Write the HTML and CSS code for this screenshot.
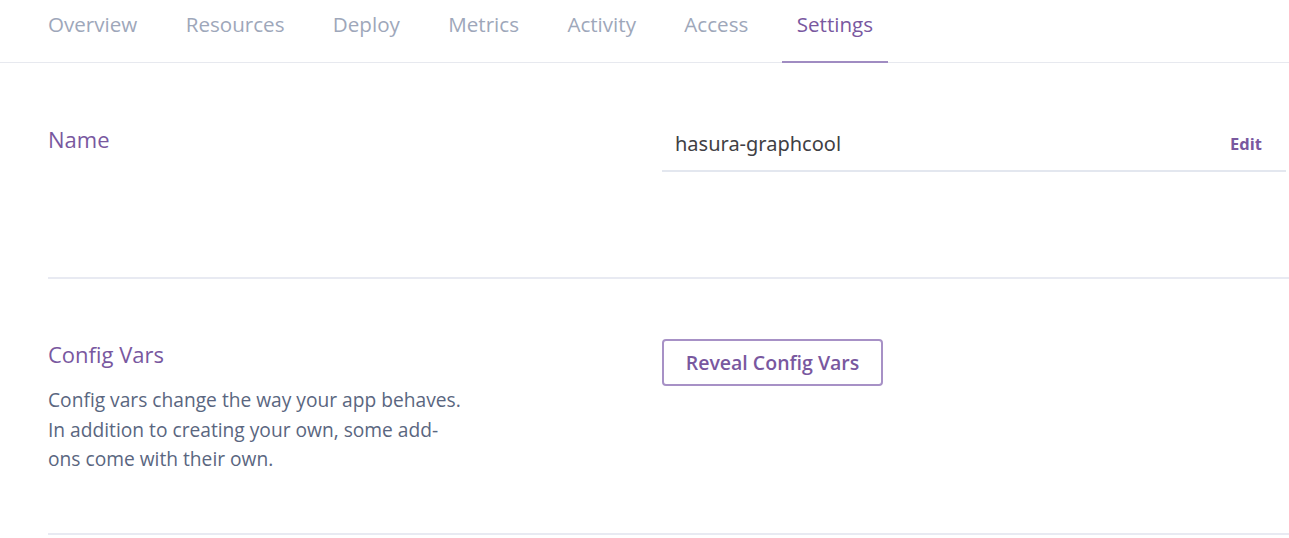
FILE: index.html
```html
<!DOCTYPE html>
<html>
<head>
<meta charset="utf-8">
<link rel="stylesheet" href="styles.css">
</head>
<body>
<nav class="tabs">
  <a class="tab">Overview</a>
  <a class="tab">Resources</a>
  <a class="tab">Deploy</a>
  <a class="tab">Metrics</a>
  <a class="tab">Activity</a>
  <a class="tab">Access</a>
  <a class="tab active">Settings</a>
</nav>
<main class="content">
  <section class="row">
    <div class="label-col">
      <h2 class="heading">Name</h2>
    </div>
    <div class="value-col">
      <div class="field">
        <span class="field-value">hasura-graphcool</span>
        <a class="edit">Edit</a>
      </div>
    </div>
  </section>
  <section class="row row-config">
    <div class="label-col">
      <h2 class="heading">Config Vars</h2>
      <p class="desc">Config vars change the way your app behaves. In addition to creating your own, some add-ons come with their own.</p>
    </div>
    <div class="value-col">
      <button class="btn">Reveal Config Vars</button>
    </div>
  </section>
</main>
</body>
</html>
```

FILE: styles.css
```css
html, body {
  margin: 0;
  padding: 0;
  background: #ffffff;
}
body {
  font-family: "Open Sans", "Noto Sans", sans-serif;
  overflow: hidden;
}
.tabs {
  display: flex;
  gap: 18.4px;
  padding-left: 33px;
  height: 62px;
  border-bottom: 1px solid #e7e9ef;
}
.tab {
  display: block;
  padding: 0 15px;
  font-size: 20.6px;
  line-height: 49px;
  height: 61px;
  color: #9ea7ba;
  cursor: pointer;
}
.tab.active {
  color: #79589f;
  border-bottom: 2px solid #a08cc2;
}
.content {
  margin-left: 48px;
}
.row {
  display: grid;
  grid-template-columns: 614px 1fr;
  border-bottom: 2px solid #e8eaf2;
  padding-top: 62px;
  padding-bottom: 105px;
}
.row-config {
  padding-top: 61px;
  padding-bottom: 59px;
}
.heading {
  margin: 0;
  font-size: 22px;
  line-height: 28px;
  font-weight: 400;
  color: #79589f;
}
.desc {
  margin: 17px 0 0;
  width: 418px;
  font-size: 19.2px;
  line-height: 29.5px;
  color: #5a6680;
}
.value-col {
  padding-right: 3px;
}
.field {
  display: flex;
  justify-content: space-between;
  align-items: center;
  margin-top: 2px;
  padding: 0 24px 9px 13px;
  line-height: 34px;
  border-bottom: 2px solid #e3e7ef;
}
.field-value {
  font-family: "Noto Sans", "Open Sans", sans-serif;
  font-size: 20px;
  color: #3f3f44;
}
.edit {
  font-size: 16.5px;
  font-weight: 700;
  color: #79589f;
  cursor: pointer;
}
.btn {
  display: block;
  width: 221px;
  height: 47px;
  margin-top: -1px;
  border: 2px solid #a791c6;
  border-radius: 4px;
  background: #ffffff;
  font-family: "Open Sans", "Noto Sans", sans-serif;
  font-size: 19.5px;
  font-weight: 600;
  color: #79589f;
  cursor: pointer;
}
```
